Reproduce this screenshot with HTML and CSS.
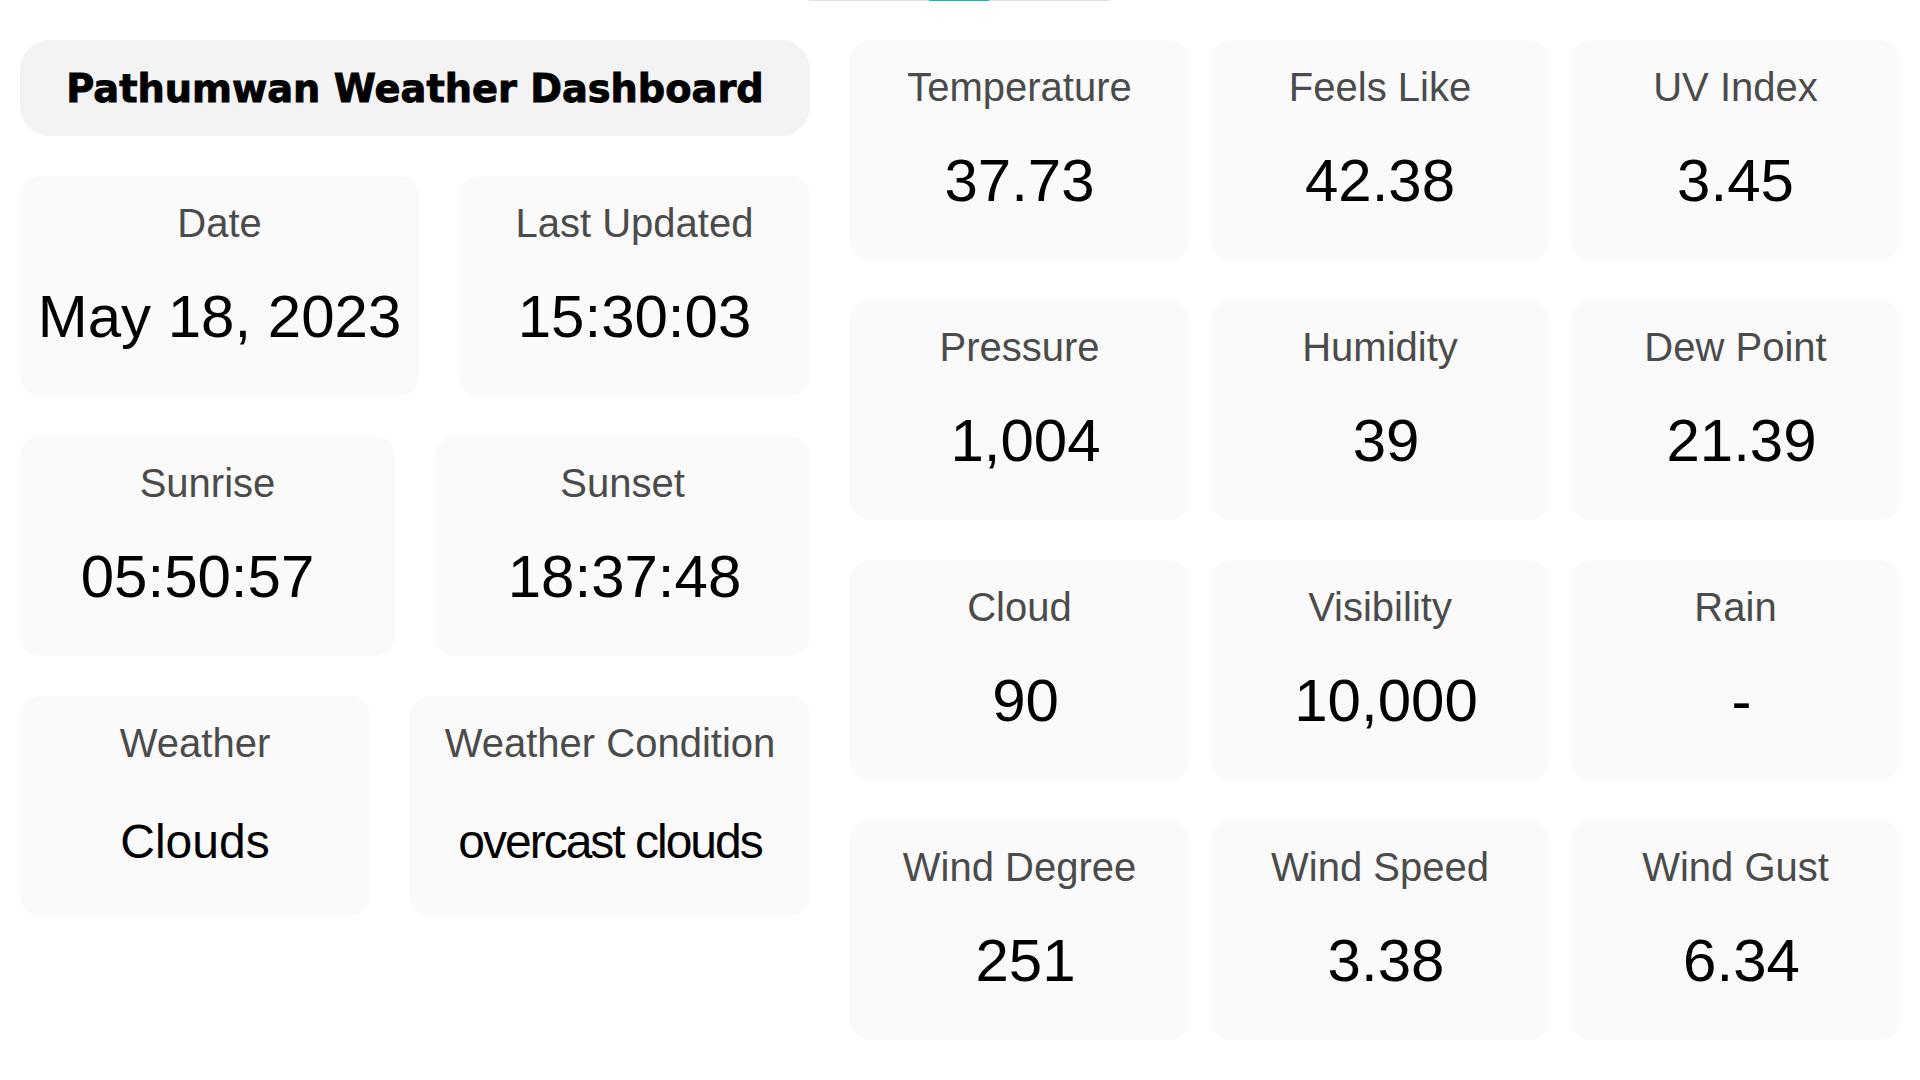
FILE: index.html
```html
<!DOCTYPE html>
<html lang="en">
<head>
<meta charset="utf-8">
<title>Pathumwan Weather Dashboard</title>
<link rel="stylesheet" href="styles.css">
</head>
<body>
<div class="loader"><div class="loader-fill"></div></div>
<main class="page">
  <section class="left">
    <header class="title-box"><h1 class="title">Pathumwan Weather Dashboard</h1></header>
    <div class="row">
      <div class="card w399"><div class="label">Date</div><div class="value">May 18, 2023</div></div>
      <div class="card w351"><div class="label">Last Updated</div><div class="value">15:30:03</div></div>
    </div>
    <div class="row">
      <div class="card w375"><div class="label">Sunrise</div><div class="value value-left">05:50:57</div></div>
      <div class="card w375"><div class="label">Sunset</div><div class="value value-nudge">18:37:48</div></div>
    </div>
    <div class="row">
      <div class="card w350"><div class="label">Weather</div><div class="value value-sm">Clouds</div></div>
      <div class="card w400"><div class="label">Weather Condition</div><div class="value value-sm value-tight">overcast clouds</div></div>
    </div>
  </section>
  <section class="grid">
    <div class="card"><div class="label">Temperature</div><div class="value">37.73</div></div>
    <div class="card"><div class="label">Feels Like</div><div class="value">42.38</div></div>
    <div class="card"><div class="label">UV Index</div><div class="value">3.45</div></div>
    <div class="card"><div class="label">Pressure</div><div class="value value-right">1,004</div></div>
    <div class="card"><div class="label">Humidity</div><div class="value value-right">39</div></div>
    <div class="card"><div class="label">Dew Point</div><div class="value value-right">21.39</div></div>
    <div class="card"><div class="label">Cloud</div><div class="value value-right">90</div></div>
    <div class="card"><div class="label">Visibility</div><div class="value value-right">10,000</div></div>
    <div class="card"><div class="label">Rain</div><div class="value value-right">-</div></div>
    <div class="card"><div class="label">Wind Degree</div><div class="value value-right">251</div></div>
    <div class="card"><div class="label">Wind Speed</div><div class="value value-right">3.38</div></div>
    <div class="card"><div class="label">Wind Gust</div><div class="value value-right">6.34</div></div>
  </section>
</main>
</body>
</html>
```
FILE: styles.css
```css
html, body {
  margin: 0;
  padding: 0;
  background: #ffffff;
  font-family: "Liberation Sans", Arial, sans-serif;
}

.loader {
  position: absolute;
  top: 0;
  left: 809px;
  width: 301px;
  height: 1px;
  background: #e0e0e0;
}

.loader-fill {
  margin-left: 120px;
  width: 60px;
  height: 1px;
  background: #00bcd4;
}

.page {
  display: flex;
  gap: 40px;
  padding: 40px 20px 0 20px;
  align-items: flex-start;
}

.left {
  width: 790px;
  display: flex;
  flex-direction: column;
  gap: 40px;
}

.title-box {
  height: 96px;
  background: #f3f3f3;
  border-radius: 30px;
  display: flex;
  align-items: center;
  justify-content: center;
}

.title {
  margin: 0;
  font-family: "DejaVu Sans", sans-serif;
  font-weight: 700;
  font-size: 38.3px;
  line-height: 44px;
  color: #000;
  -webkit-text-stroke: 0.9px #000;
  padding-top: 2px;
}

.row {
  display: flex;
  gap: 40px;
}

.card {
  background: #fafafa;
  border-radius: 20px;
  height: 220px;
  box-sizing: border-box;
  padding: 24px 10px 0;
  text-align: center;
  white-space: nowrap;
}

.w399 { width: 399px; }
.w351 { width: 351px; }
.w375 { width: 375px; }
.w350 { width: 350px; }
.w400 { width: 400px; }

.label {
  font-size: 40px;
  line-height: 46px;
  color: #4b4b4b;
}

.value {
  font-size: 60px;
  line-height: 68px;
  margin-top: 37px;
  color: #000;
}

.value-right {
  padding-left: 12px;
}

.value-left {
  padding-right: 20px;
}

.value-nudge {
  padding-left: 4px;
}

.value-sm {
  font-size: 48px;
  margin-top: 42px;
}

.value-tight {
  letter-spacing: -2px;
}

.grid {
  display: grid;
  grid-template-columns: 339px 338px 329px;
  grid-auto-rows: 220px;
  column-gap: 22px;
  row-gap: 40px;
}
```
